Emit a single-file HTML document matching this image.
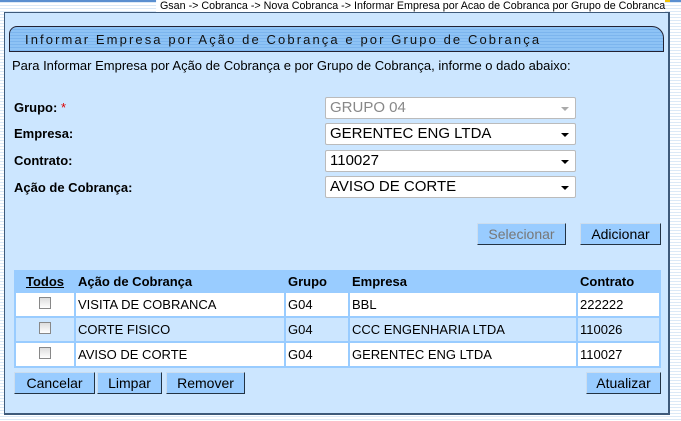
<!DOCTYPE html>
<html><head><meta charset="utf-8"><style>
body{margin:0;width:681px;height:421px;overflow:hidden;position:relative;font-family:"Liberation Sans",sans-serif;
background:repeating-linear-gradient(#fff 0 2px,#dbe9f7 2px 3px);}
.a{position:absolute}
#top{left:0;top:0;width:681px;height:2px;background:#5a8fd0}
#yl{left:470px;top:0;width:200px;height:2px;background:#f2c200}
#bc{right:16px;top:0;font-size:11px;color:#000;line-height:12px;background:#fff;padding-left:4px;transform:scaleX(.975);transform-origin:right;white-space:nowrap}
#panel{left:4px;top:12px;width:663px;height:400px;background:#cce6ff;border:1px solid #3e5a7a;border-width:1px 2px 2px 1px}
#title{left:9px;top:26px;width:653px;height:24px;border:1px solid #223;border-radius:8px 12px 0 0;
background:repeating-linear-gradient(#8ec3f5 0 2px,#7cb5ee 2px 3px);}
#title span{position:absolute;left:15px;top:5px;font-size:13px;letter-spacing:2.1px;color:#111}
.t{font-size:13px;color:#000}
.l{font-size:13px;font-weight:bold}
.sel{left:325px;width:249px;height:20px;background:#fff;border:1px solid #bbb;border-radius:2px;font-size:15px;line-height:20px;text-indent:4px}
.sel:after{content:"";position:absolute;right:6px;top:9px;border:4px solid transparent;border-top:4px solid #000;border-bottom:0}
.dis{color:#888}.dis:after{border-top-color:#aaa}
.btn{height:20px;background:#99ccff;border:1px solid #345;border-color:#cde #234 #234 #cde;font-size:14px;line-height:20px;text-align:center}
table{position:absolute;left:14px;top:270px;width:647px;border-collapse:collapse;font-size:13px}
td{border:2px solid #99ccff;height:23px;padding:0 2px;background:#fff}
tr.h td{background:#99ccff;font-weight:bold;height:19px}
tr.z td{background:#cce6ff}
.cb{display:inline-block;width:10px;height:10px;border:1px solid #888;background:linear-gradient(#ddd,#fff)}
</style></head><body>
<div class="a" id="top"></div><div class="a" id="yl"></div>
<div class="a" id="bc">Gsan -&gt; Cobranca -&gt; Nova Cobranca -&gt; Informar Empresa por Acao de Cobranca por Grupo de Cobranca</div>
<div class="a" id="panel"></div>
<div class="a" id="title"><span>Informar Empresa por Ação de Cobrança e por Grupo de Cobrança</span></div>
<div class="a t" style="left:12px;top:58px">Para Informar Empresa por Ação de Cobrança e por Grupo de Cobrança, informe o dado abaixo:</div>
<div class="a l" style="left:14px;top:100px">Grupo:<span style="color:#d00;font-weight:normal"> *</span></div>
<div class="a l" style="left:14px;top:126px">Empresa:</div>
<div class="a l" style="left:14px;top:153px">Contrato:</div>
<div class="a l" style="left:14px;top:180px">Ação de Cobrança:</div>
<div class="a sel dis" style="top:97px">GRUPO 04</div>
<div class="a sel" style="top:123px">GERENTEC ENG LTDA</div>
<div class="a sel" style="top:150px">110027</div>
<div class="a sel" style="top:176px">AVISO DE CORTE</div>
<div class="a btn" style="left:477px;top:223px;width:87px;color:#777">Selecionar</div>
<div class="a btn" style="left:580px;top:223px;width:79px">Adicionar</div>
<table>
<tr class="h"><td style="width:54px;text-align:center"><u>Todos</u></td><td style="width:204px">Ação de Cobrança</td><td style="width:58px">Grupo</td><td style="width:222px">Empresa</td><td>Contrato</td></tr>
<tr><td style="text-align:center"><span class="cb"></span></td><td>VISITA DE COBRANCA</td><td>G04</td><td>BBL</td><td>222222</td></tr>
<tr class="z"><td style="text-align:center"><span class="cb"></span></td><td>CORTE FISICO</td><td>G04</td><td>CCC ENGENHARIA LTDA</td><td>110026</td></tr>
<tr><td style="text-align:center"><span class="cb"></span></td><td>AVISO DE CORTE</td><td>G04</td><td>GERENTEC ENG LTDA</td><td>110027</td></tr>
</table>
<div class="a btn" style="left:14px;top:372px;width:79px">Cancelar</div>
<div class="a btn" style="left:97px;top:372px;width:63px">Limpar</div>
<div class="a btn" style="left:166px;top:372px;width:77px">Remover</div>
<div class="a btn" style="left:586px;top:372px;width:73px">Atualizar</div>
</body></html>
